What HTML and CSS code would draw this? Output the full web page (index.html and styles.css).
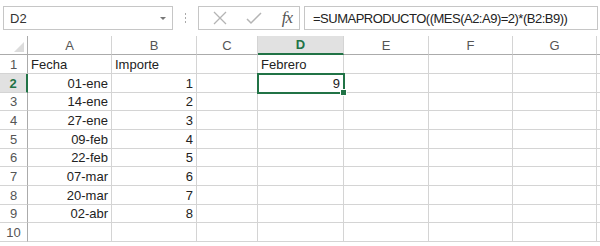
FILE: index.html
```html
<!DOCTYPE html>
<html lang="es">
<head>
<meta charset="UTF-8">
<title>Hoja de cálculo</title>
<link rel="stylesheet" href="styles.css">
</head>
<body>
<div class="toolbar">
    <div class="namebox">
        <span>D2</span>
        <span class="arrow"></span>
    </div>
    <div class="dots"><i></i><i></i><i></i></div>
    <div class="actions">
        <svg width="14" height="14" viewBox="0 0 14 14"><path d="M1 1 L13 13 M13 1 L1 13" stroke="#b4b4b4" stroke-width="1.3" fill="none"/></svg>
        <svg width="18" height="14" viewBox="0 0 18 14"><path d="M2 8 L6 12 L16 2" stroke="#b4b4b4" stroke-width="1.5" fill="none"/></svg>
        <span class="fx">fx</span>
    </div>
    <div class="formula">=SUMAPRODUCTO((MES(A2:A9)=2)*(B2:B9))</div>
</div>

<div class="sheet">
    <div class="corner"><span class="tri"></span></div>
    <div class="colhdr">A</div>
    <div class="colhdr">B</div>
    <div class="colhdr">C</div>
    <div class="colhdr active">D</div>
    <div class="colhdr">E</div>
    <div class="colhdr">F</div>
    <div class="colhdr">G</div>
    <div class="colhdr"></div>

    <div class="rowhdr">1</div>
    <div class="cell">Fecha</div>
    <div class="cell">Importe</div>
    <div class="cell"></div>
    <div class="cell">Febrero</div>
    <div class="cell"></div><div class="cell"></div><div class="cell"></div><div class="cell"></div>

    <div class="rowhdr active">2</div>
    <div class="cell num">01-ene</div>
    <div class="cell num">1</div>
    <div class="cell"></div>
    <div class="cell num selected">9<span class="handle"></span></div>
    <div class="cell"></div><div class="cell"></div><div class="cell"></div><div class="cell"></div>

    <div class="rowhdr">3</div>
    <div class="cell num">14-ene</div>
    <div class="cell num">2</div>
    <div class="cell"></div><div class="cell"></div><div class="cell"></div><div class="cell"></div><div class="cell"></div><div class="cell"></div>

    <div class="rowhdr">4</div>
    <div class="cell num">27-ene</div>
    <div class="cell num">3</div>
    <div class="cell"></div><div class="cell"></div><div class="cell"></div><div class="cell"></div><div class="cell"></div><div class="cell"></div>

    <div class="rowhdr">5</div>
    <div class="cell num">09-feb</div>
    <div class="cell num">4</div>
    <div class="cell"></div><div class="cell"></div><div class="cell"></div><div class="cell"></div><div class="cell"></div><div class="cell"></div>

    <div class="rowhdr">6</div>
    <div class="cell num">22-feb</div>
    <div class="cell num">5</div>
    <div class="cell"></div><div class="cell"></div><div class="cell"></div><div class="cell"></div><div class="cell"></div><div class="cell"></div>

    <div class="rowhdr">7</div>
    <div class="cell num">07-mar</div>
    <div class="cell num">6</div>
    <div class="cell"></div><div class="cell"></div><div class="cell"></div><div class="cell"></div><div class="cell"></div><div class="cell"></div>

    <div class="rowhdr">8</div>
    <div class="cell num">20-mar</div>
    <div class="cell num">7</div>
    <div class="cell"></div><div class="cell"></div><div class="cell"></div><div class="cell"></div><div class="cell"></div><div class="cell"></div>

    <div class="rowhdr">9</div>
    <div class="cell num">02-abr</div>
    <div class="cell num">8</div>
    <div class="cell"></div><div class="cell"></div><div class="cell"></div><div class="cell"></div><div class="cell"></div><div class="cell"></div>

    <div class="rowhdr">10</div>
    <div class="cell"></div><div class="cell"></div><div class="cell"></div><div class="cell"></div><div class="cell"></div><div class="cell"></div><div class="cell"></div><div class="cell"></div>
</div>
</body>
</html>
```

FILE: styles.css
```css
body {
    margin: 0;
    padding: 0;
    background: #fff;
    font-family: "Liberation Sans", Arial, sans-serif;
    font-size: 13px;
    color: #222;
    width: 600px;
    height: 246px;
    overflow: hidden;
}

/* barra de fórmulas */
.toolbar {
    display: flex;
    align-items: center;
    height: 36px;
    padding: 0 0 0 3px;
    box-sizing: border-box;
}

.namebox {
    width: 170px;
    height: 24px;
    border: 1px solid #c6c6c6;
    box-sizing: border-box;
    display: flex;
    align-items: center;
    justify-content: space-between;
    padding: 0 6px 0 6px;
    font-size: 13px;
    color: #333;
}

.arrow {
    width: 0;
    height: 0;
    border-left: 3px solid transparent;
    border-right: 3px solid transparent;
    border-top: 3px solid #777;
}

.dots {
    width: 25px;
    display: flex;
    flex-direction: column;
    align-items: center;
    gap: 2px;
}

.dots i {
    width: 1px;
    height: 2px;
    background: #aaa;
}

.actions {
    width: 102px;
    height: 24px;
    border: 1px solid #c6c6c6;
    box-sizing: border-box;
    display: flex;
    align-items: center;
    justify-content: space-between;
    padding: 0 7px 0 14px;
}

.fx {
    font-family: "Liberation Serif", "Times New Roman", serif;
    font-style: italic;
    font-size: 17px;
    color: #555;
    letter-spacing: -1px;
}

.formula {
    flex: 1;
    height: 24px;
    margin: 0 2px 0 4px;
    border: 1px solid #c6c6c6;
    box-sizing: border-box;
    display: flex;
    align-items: center;
    padding-left: 8px;
    font-size: 13px;
    letter-spacing: -0.5px;
    color: #222;
    white-space: nowrap;
}

/* hoja */
.sheet {
    display: grid;
    grid-template-columns: 28px 84px 85px 61px 86px 85px 84px 84px 10px;
    grid-template-rows: 19px 19px 19px 18px 19px 19px 18px 19px 19px 18px 19px;
}

.corner,
.colhdr,
.rowhdr,
.cell {
    box-sizing: border-box;
    border-right: 1px solid #d4d4d4;
    border-bottom: 1px solid #d4d4d4;
    overflow: hidden;
    white-space: nowrap;
}

.corner {
    border-bottom-color: #ababab;
    border-right-color: #ababab;
    position: relative;
}

.tri {
    position: absolute;
    right: 3px;
    bottom: 2px;
    width: 0;
    height: 0;
    border-left: 10px solid transparent;
    border-bottom: 10px solid #dcdcdc;
}

.colhdr {
    border-bottom-color: #ababab;
    display: flex;
    align-items: center;
    justify-content: center;
    color: #555;
    font-size: 13px;
}

.colhdr.active {
    background: #e1e1e1;
    border-bottom: 2px solid #217346;
    color: #217346;
    font-weight: bold;
}

.rowhdr {
    border-right-color: #ababab;
    display: flex;
    align-items: flex-end;
    justify-content: center;
    padding-bottom: 1px;
    color: #555;
    font-size: 13px;
}

.rowhdr.active {
    background: #e1e1e1;
    border-right: 2px solid #217346;
    color: #217346;
    font-weight: bold;
}

.cell {
    display: flex;
    align-items: flex-end;
    padding: 0 3px 1px 3px;
}

.cell.num {
    justify-content: flex-end;
}

.cell.selected {
    position: relative;
    overflow: visible;
    outline: 2px solid #217346;
    outline-offset: -1px;
    z-index: 1;
}

.handle {
    position: absolute;
    right: -4px;
    bottom: -4px;
    width: 5px;
    height: 5px;
    background: #217346;
    border: 1px solid #fff;
}
```
